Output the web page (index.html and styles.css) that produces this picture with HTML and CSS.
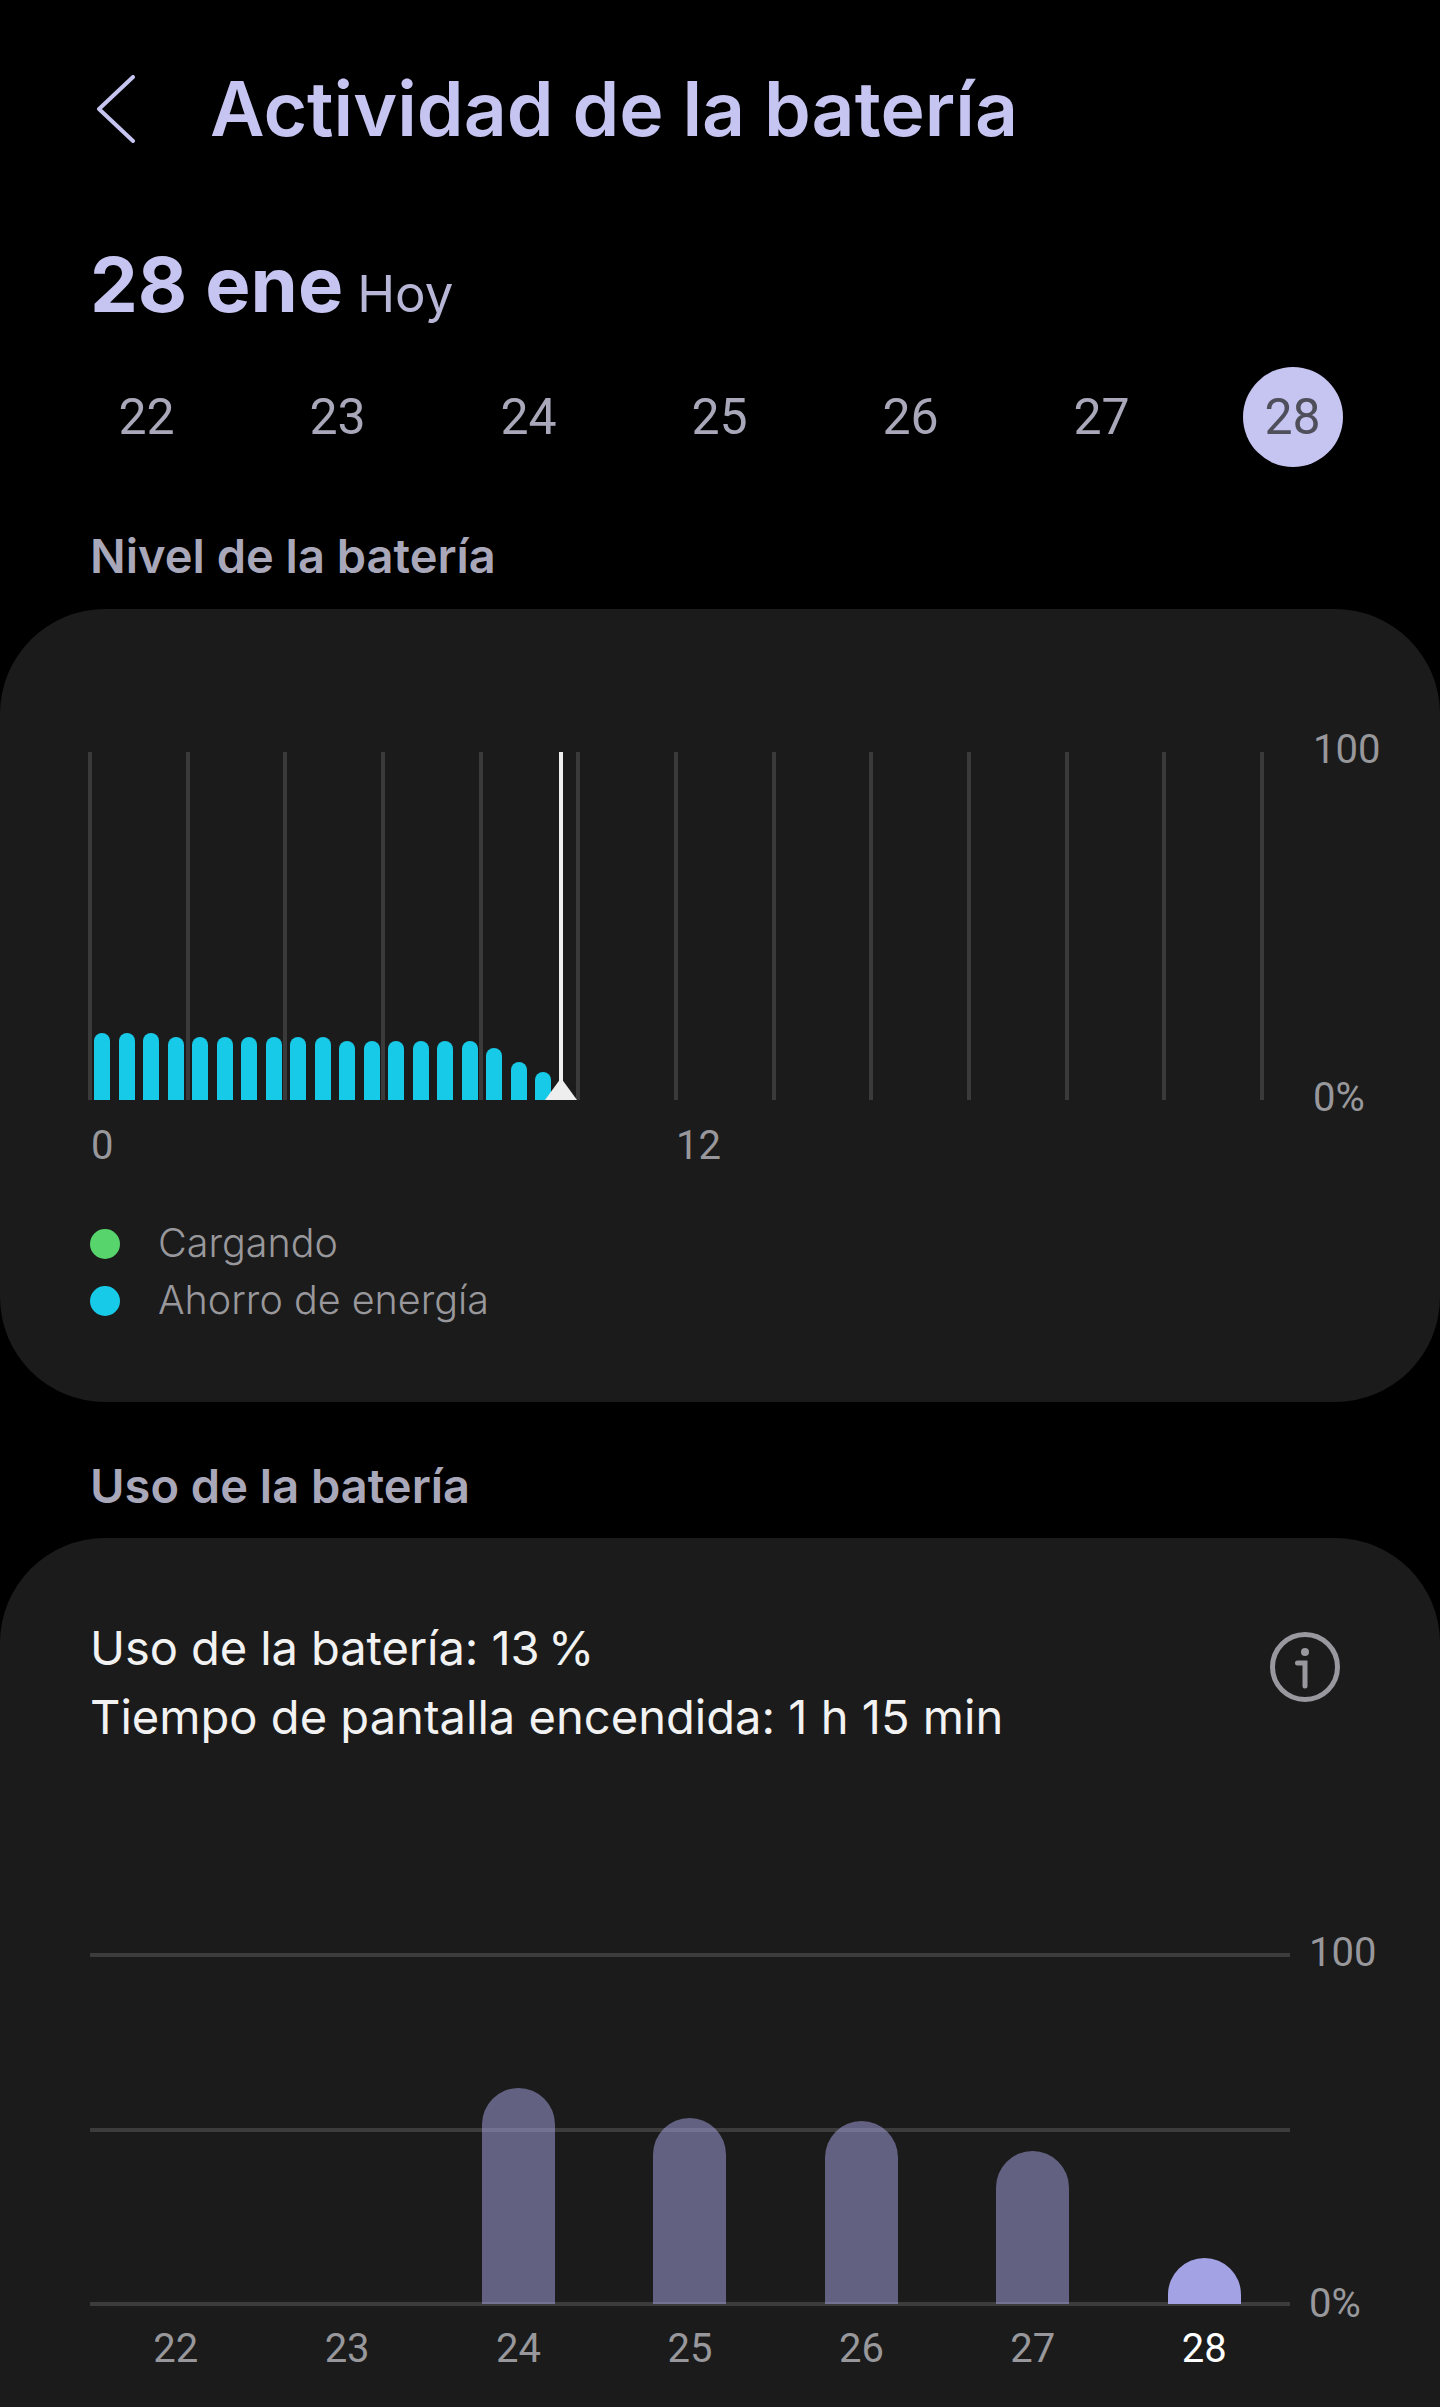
FILE: index.html
```html
<!DOCTYPE html>
<html lang="es">
<head>
  <meta charset="UTF-8" />
  <meta name="viewport" content="width=device-width, initial-scale=1.0" />
  <title>Actividad de la batería</title>
  <link rel="stylesheet" href="styles.css">
</head>
<body>
  <header class="top-bar">
    <svg class="back" viewBox="0 0 40 68" aria-hidden="true"><path d="M37 2 L3 34 L37 66" /></svg>
    <h1>Actividad de la batería</h1>
  </header>

  <div class="date-title"><strong>28 ene</strong><span>Hoy</span></div>

  <div class="days">
    <span>22</span><span>23</span><span>24</span><span>25</span><span>26</span><span>27</span>
    <span class="selected">28</span>
  </div>

  <h2 class="section-title">Nivel de la batería</h2>
  <section class="card level-card">
    <div class="chart-row">
      <div class="level-chart">
        <div class="v-lines">
          <i></i><i></i><i></i><i></i><i></i><i></i><i></i><i></i><i></i><i></i><i></i><i></i><i></i>
        </div>
        <div class="level-bars">
          <i style="height:67px"></i><i style="height:67px"></i><i style="height:67px"></i>
          <i style="height:63px"></i><i style="height:63px"></i><i style="height:63px"></i><i style="height:63px"></i>
          <i style="height:63px"></i><i style="height:63px"></i><i style="height:63px"></i>
          <i style="height:59px"></i><i style="height:59px"></i><i style="height:59px"></i>
          <i style="height:59px"></i><i style="height:59px"></i><i style="height:59px"></i>
          <i style="height:52px"></i><i style="height:38px"></i><i style="height:28px"></i>
        </div>
        <div class="now-line"></div>
        <div class="now-mark"></div>
      </div>
      <div class="y-axis level-axis"><span>100</span><span>0%</span></div>
    </div>
    <div class="hours"><span class="hour-0">0</span><span class="hour-12">12</span></div>
    <ul class="legend">
      <li><i class="dot green"></i>Cargando</li>
      <li><i class="dot cyan"></i>Ahorro de energía</li>
    </ul>
  </section>

  <h2 class="section-title second">Uso de la batería</h2>
  <section class="card usage-card">
    <div class="usage-head">
      <p><span class="usage-first">Uso de la batería: 13&#8201;%</span><br>Tiempo de pantalla encendida: 1 h 15 min</p>
      <svg class="info" viewBox="0 0 70 70" aria-hidden="true">
        <circle cx="35" cy="35" r="32.5" />
        <path d="M27.5 31 H35 V54" />
        <circle class="info-dot" cx="35" cy="20" r="4" />
      </svg>
    </div>
    <div class="chart-row">
      <div class="usage-chart">
        <div class="h-lines"><i></i><i></i><i></i></div>
        <div class="usage-bars">
          <div></div>
          <div></div>
          <div><i style="height:216px"></i></div>
          <div><i style="height:186px"></i></div>
          <div><i style="height:183px"></i></div>
          <div><i style="height:153px"></i></div>
          <div><i class="today" style="height:46px"></i></div>
        </div>
      </div>
      <div class="y-axis usage-axis"><span>100</span><span>0%</span></div>
    </div>
    <div class="usage-days">
      <span>22</span><span>23</span><span>24</span><span>25</span><span>26</span><span>27</span>
      <span class="today-label">28</span>
    </div>
  </section>
</body>
</html>
```

FILE: styles.css
```css
* {
  box-sizing: border-box;
}
html, body {
  margin: 0;
  height: 2407px;
  overflow: hidden;
}
body {
  background: #000;
  color: #f2f2f2;
  font-family: Inter, "Noto Sans", sans-serif;
}

/* header */
.top-bar {
  display: flex;
  align-items: center;
  height: 110px;
  margin-top: 54px;
  padding-left: 96px;
}
.back {
  width: 40px;
  height: 68px;
  fill: none;
  stroke: #c6c4f0;
  stroke-width: 4;
  stroke-linecap: round;
  stroke-linejoin: round;
}
h1 {
  margin: 0 0 0 74px;
  font-size: 75px;
  font-weight: 600;
  line-height: 110px;
  color: #c6c4f0;
}

.date-title {
  display: flex;
  align-items: baseline;
  margin-top: 73px;
  padding-left: 90px;
  line-height: 94px;
  color: #c6c4f0;
}
.date-title strong {
  font-size: 76px;
  font-weight: 700;
}
.date-title span {
  margin-left: 14px;
  font-size: 51px;
  font-weight: 400;
  color: #b7b6d6;
}

.days {
  display: flex;
  height: 100px;
  margin-top: 26px;
  padding-left: 51px;
}
.days span {
  display: flex;
  align-items: center;
  justify-content: center;
  width: 191px;
  font-family: Roboto, sans-serif;
  font-size: 50px;
  color: #a9a8ba;
}
.days .selected {
  position: relative;
  z-index: 0;
  color: #4f4f5c;
}
.days .selected::before {
  content: "";
  position: absolute;
  left: 46px;
  top: 0;
  width: 100px;
  height: 100px;
  border-radius: 50%;
  background: #c6c4f0;
  z-index: -1;
}

.section-title {
  margin: 0;
  padding-left: 90px;
  margin-top: 59px;
  font-size: 47px;
  font-weight: 600;
  line-height: 60px;
  color: #a9a8ba;
}
.section-title.second {
  margin-top: 54px;
}

/* cards */
.card {
  background: #1b1b1b;
  border-radius: 105px;
}
.level-card {
  height: 793px;
  margin-top: 23px;
  padding: 143px 0 0 88px;
}
.usage-card {
  height: 900px;
  margin-top: 22px;
  padding: 75px 0 0 90px;
  border-radius: 105px 105px 0 0;
}

.chart-row {
  display: flex;
}
.y-axis {
  display: flex;
  flex-direction: column;
  justify-content: space-between;
  font-family: Roboto, sans-serif;
  font-size: 40px;
  line-height: 46px;
  color: #98989c;
}

/* battery level chart */
.level-chart {
  position: relative;
  width: 1176px;
  height: 348px;
}
.v-lines {
  display: flex;
  justify-content: space-between;
  height: 100%;
}
.v-lines i {
  width: 4px;
  background: #3a3a3a;
}
.level-bars {
  position: absolute;
  left: 6px;
  bottom: 0;
  display: flex;
  align-items: flex-end;
  gap: 8.5px;
}
.level-bars i {
  width: 16px;
  border-radius: 8px 8px 0 0;
  background: #17cbe8;
}
.now-line {
  position: absolute;
  left: 471px;
  top: 0;
  width: 4px;
  height: 100%;
  background: #eee;
}
.now-mark {
  position: absolute;
  left: 457px;
  bottom: 0;
  width: 32px;
  height: 22px;
  background: #eee;
  clip-path: polygon(50% 0, 100% 100%, 0 100%);
}
.level-axis {
  height: 394px;
  margin: -25px 0 0 49px;
}
.hours {
  display: flex;
  margin-top: 2px;
  font-family: Roboto, sans-serif;
  font-size: 40px;
  line-height: 46px;
  color: #98989c;
}
.hour-0 {
  width: 588px;
  padding-left: 3px;
}
.legend {
  margin: 46px 0 0;
  padding: 0 0 0 2px;
  list-style: none;
  font-size: 39.5px;
  font-weight: 300;
  line-height: 57px;
  color: #98989c;
}
.legend li {
  display: flex;
  align-items: center;
}
.dot {
  width: 30px;
  height: 30px;
  margin-right: 38px;
  border-radius: 50%;
}
.green {
  background: #57d56c;
}
.cyan {
  background: #17cbe8;
}

/* battery usage */
.usage-head {
  display: flex;
  justify-content: space-between;
  width: 1250px;
}
.usage-head p {
  margin: 0;
  font-size: 47.1px;
  font-weight: 400;
  line-height: 69px;
}
.usage-first {
  letter-spacing: -0.1px;
}
.info {
  width: 70px;
  height: 70px;
  margin-top: 19px;
  fill: none;
  stroke: #98989e;
  stroke-width: 5;
  stroke-linecap: round;
}
.info-dot {
  fill: #98989e;
  stroke: none;
}
.usage-head + .chart-row {
  margin-top: 202px;
}
.usage-chart {
  position: relative;
  width: 1200px;
  height: 353px;
}
.h-lines {
  display: flex;
  flex-direction: column;
  justify-content: space-between;
  height: 100%;
}
.h-lines i {
  height: 4px;
  background: #3c3c3c;
}
.usage-bars {
  position: absolute;
  left: 0;
  right: 0;
  bottom: 2px;
  display: flex;
  align-items: flex-end;
}
.usage-bars div {
  display: flex;
  flex: 1;
  justify-content: center;
}
.usage-bars i {
  width: 73px;
  border-radius: 37px 37px 0 0;
  background: rgba(170, 168, 232, 0.5);
}
.usage-bars .today {
  background: #a3a2e5;
}
.usage-axis {
  height: 397px;
  margin: -23px 0 0 19px;
}
.usage-days {
  display: flex;
  width: 1200px;
  margin-top: -1px;
  font-family: Roboto, sans-serif;
  font-size: 40px;
  line-height: 46px;
  color: #98989c;
}
.usage-days span {
  flex: 1;
  text-align: center;
}
.usage-days .today-label {
  color: #fff;
}
```
